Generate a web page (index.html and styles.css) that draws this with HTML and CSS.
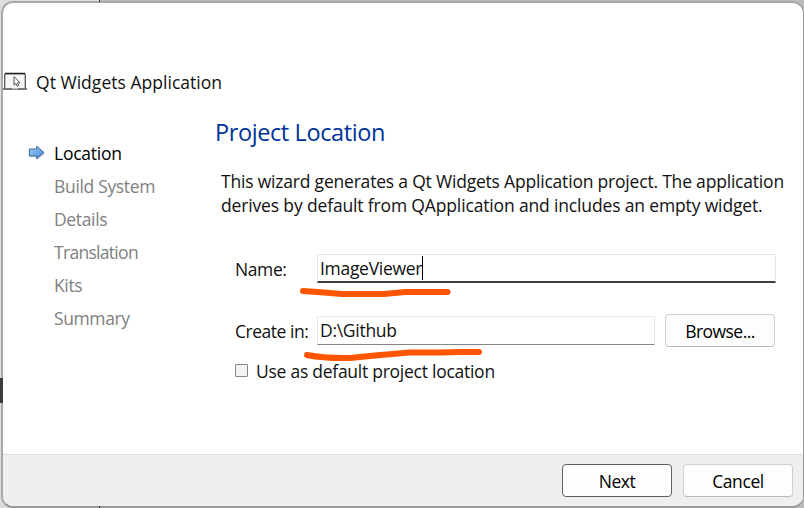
FILE: index.html
```
<!DOCTYPE html>
<html lang="en">
<head>
<meta charset="utf-8">
<title>Qt Widgets Application</title>
<link rel="stylesheet" href="styles.css">
</head>
<body>
<div class="desktop">
  <span class="edge edge-top"></span>
  <span class="edge edge-bottom"></span>
  <div class="dialog">
    <header class="header">
      <svg class="app-icon" width="24" height="19" viewBox="0 0 24 19">
        <rect x="1.7" y="1.7" width="20.6" height="15" rx="1" fill="#f7f7f7" stroke="#555" stroke-width="1.3"/>
        <path d="M2 1.500H22" stroke="#222" stroke-width="1.3"/>
        <path d="M0 17H24" stroke="#777" stroke-width="1.8"/>
        <path d="M9 16.700H15" stroke="#ccc" stroke-width="1"/>
        <path d="M11 4.600V13.200L13 11.400L14.300 14.300L15.800 13.600L14.500 10.800H17Z" fill="#fff" stroke="#555" stroke-width="1"/>
      </svg>
      <span class="header-title">Qt Widgets Application</span>
    </header>
    <div class="content">
      <ul class="steps">
        <li class="step current">
          <svg class="arrow" width="18" height="16" viewBox="0 0 18 16">
            <defs><linearGradient id="blue" x1="0" y1="0" x2="1" y2="1"><stop offset="0" stop-color="#a5cdf8"/><stop offset="1" stop-color="#3f86dc"/></linearGradient></defs>
            <path d="M2 5H9.3V1.8L17 8.6L9.3 15.2V12H2Z" fill="#ccc" opacity=".7"/>
            <path d="M1.3 4H8.7V1.2L16 7.5L8.7 13.8V11H1.3Z" fill="url(#blue)" stroke="#3f6796"/>
          </svg>
          <span class="location">Location</span>
        </li>
        <li class="step"><span class="build">Build System</span></li>
        <li class="step"><span class="details">Details</span></li>
        <li class="step"><span class="translation">Translation</span></li>
        <li class="step"><span class="kits">Kits</span></li>
        <li class="step"><span class="summary">Summary</span></li>
      </ul>
      <main class="page">
        <h1 class="title">Project Location</h1>
        <p class="intro"><span class="intro-first">This wizard generates a Qt Widgets Application project. The application</span><br><span class="intro-second">derives by default from QApplication and includes an empty widget.</span></p>
        <div class="row name-row">
          <label class="label name-label">Name:</label>
          <div class="field focused"><span class="name-value">ImageViewer</span><i class="caret"></i></div>
        </div>
        <div class="row path-row">
          <label class="label path-label">Create in:</label>
          <div class="field"><span class="path-value">D:\Github</span></div>
          <button class="button browse">Browse...</button>
        </div>
        <div class="check-row"><span class="checkbox"></span><span class="check-label">Use as default project location</span></div>
      </main>
    </div>
    <footer class="footer">
      <button class="button next">Next</button>
      <button class="button cancel">Cancel</button>
    </footer>
  </div>
  <svg class="marks" width="804" height="508" viewBox="0 0 804 508">
    <path d="M303 291L321 292.3L342 294H384L405 292H447.500"/>
    <path d="M307 355C317 357 331 358.500 350 358L375 355.500L410 352.500H440L460 352H479"/>
  </svg>
</div>
</body>
</html>
```
FILE: styles.css
```
* { box-sizing: border-box; }
body { margin: 0; font: 17.5px/24px "Open Sans", "Noto Sans", sans-serif; color: #111; }
.desktop { position: relative; width: 804px; height: 508px; padding: 1px 0 1px 1px; overflow: hidden; background: linear-gradient(90deg, #ddd 99px, #bbb 99px); }
.edge { position: absolute; z-index: 1; background: #333; }
.edge-top { left: 99px; top: 0; width: 1px; height: 2px; }
.edge-bottom { left: 99px; top: 506px; width: 1px; height: 2px; }
.desktop::before { content: ""; position: absolute; z-index: 1; left: 0; top: 378px; width: 3px; height: 25px; background: #3c3c3c; }
.dialog { display: flex; flex-direction: column; width: 803px; height: 507px; border: 2px solid #a9a9a9; border-right: 1px solid #999; border-bottom-color: #999; border-radius: 12px; overflow: hidden; background: #fff; }
.header { display: flex; align-items: center; gap: 9px; height: 24px; margin: 67px 0 0; }
.app-icon { display: block; margin-top: -1px; }
.header-title { letter-spacing: .03px; }
.content { display: flex; flex: 1; }
.steps { width: 212px; margin: 0; padding: 42px 0 0 25px; list-style: none; color: #808080; }
.step { display: flex; align-items: center; height: 33px; padding-left: 26px; white-space: nowrap; }
.step.current { padding-left: 0; color: #000; }
.arrow { margin-right: 8px; }
.location { letter-spacing: -.25px; }
.build { letter-spacing: -.33px; }
.details { letter-spacing: -.35px; }
.translation { letter-spacing: -.7px; }
.kits { letter-spacing: -.35px; }
.summary { letter-spacing: -.4px; }
.page { flex: 1; }
.title { margin: 23px 0 0; font-size: 23.5px; line-height: 30px; font-weight: 400; letter-spacing: -.4px; color: #003399; }
.intro { margin: 22px 0 0 6px; white-space: nowrap; }
.intro-first { letter-spacing: -.2px; }
.intro-second { letter-spacing: -.15px; }
.row { display: flex; align-items: center; height: 29px; margin: 37px 28px 0 20px; }
.name-row { margin-right: 27px; }
.path-row { margin-top: 31px; height: 33px; }
.label { width: 82px; margin-top: 1px; white-space: nowrap; }
.name-label { letter-spacing: -.4px; }
.path-label { letter-spacing: -.48px; }
.field { display: flex; align-items: center; flex: 1; height: 29px; padding: 0 0 1px 2px; border: 1px solid #e8e8e8; border-bottom-color: #858585; }
.field.focused { border-bottom: 2px solid #404040; padding-bottom: 0; }
.name-value { letter-spacing: -.3px; }
.path-value { letter-spacing: -.28px; }
.caret { width: 1px; height: 24px; background: #000; }
.button { width: 110px; height: 33px; padding: 0; border: 1px solid #d0d0d0; border-bottom-color: #b9b9b9; border-radius: 4px; background: #fdfdfd; font: inherit; color: #000; }
.browse { margin-left: 10px; letter-spacing: -.55px; }
.check-row { display: flex; align-items: center; height: 24px; margin: 12px 0 0 20px; }
.checkbox { width: 13px; height: 13px; margin: -1px 8px 0 0; border: 1px solid #858585; border-radius: 1px; background: #f3f3f3; }
.check-label { letter-spacing: -.26px; }
.footer { display: flex; justify-content: flex-end; gap: 11px; height: 52px; padding: 9px 10px 0 0; border-top: 1px solid #dfdfdf; background: #efefef; }
.button.next { border-color: #606060; letter-spacing: -.5px; }
.cancel { letter-spacing: -.4px; }
.marks { position: absolute; z-index: 2; left: 0; top: 0; pointer-events: none; fill: none; stroke: #ff5500; stroke-width: 6; stroke-linecap: round; stroke-linejoin: round; }
```
